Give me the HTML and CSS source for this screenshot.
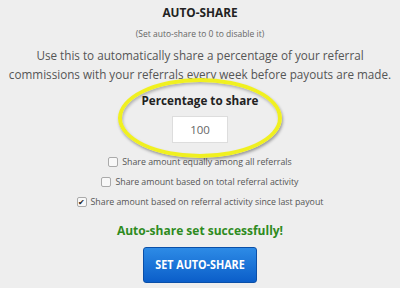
FILE: index.html
```html
<!DOCTYPE html>
<html>
<head>
<meta charset="utf-8">
<link rel="stylesheet" href="styles.css">
</head>
<body>
<div class="page">
  <h1 class="title">AUTO-SHARE</h1>
  <p class="hint">(Set auto-share to 0 to disable it)</p>
  <p class="lead">Use this to automatically share a percentage of your referral<br>commissions with your referrals every week before payouts are made.</p>
  <div class="pct">
    <div class="pct-label">Percentage to share</div>
    <div class="pct-input">100</div>
    <div class="ring"></div>
  </div>
  <div class="options">
    <label class="opt"><span class="box"></span>Share amount equally among all referrals</label>
    <label class="opt"><span class="box"></span>Share amount based on total referral activity</label>
    <label class="opt"><span class="box checked">&#10004;</span>Share amount based on referral activity since last payout</label>
  </div>
  <div class="success">Auto-share set successfully!</div>
  <div class="btn"><span class="btn-text">SET AUTO-SHARE</span></div>
</div>
</body>
</html>
```
FILE: styles.css
```css
html, body {
  margin: 0;
  padding: 0;
  background: #eeeeee;
}
.page {
  width: 400px;
  height: 288px;
  overflow: hidden;
  font-family: "Open Sans", "Noto Sans", sans-serif;
  color: #444;
  display: flex;
  flex-direction: column;
  align-items: center;
  text-align: center;
}
.title {
  margin: 4px 0 0;
  font-size: 11.8px;
  font-weight: 700;
  line-height: 16px;
  color: #222;
}
.hint {
  margin: 9px 0 0;
  font-size: 8.5px;
  line-height: 10px;
  color: #666;
}
.lead {
  margin: 6.5px 0 0;
  font-size: 11.7px;
  line-height: 19px;
  color: #555;
  white-space: nowrap;
}
.pct {
  position: relative;
  display: flex;
  flex-direction: column;
  align-items: center;
  margin-top: 8.5px;
}
.pct-label {
  font-size: 11.7px;
  font-weight: 700;
  color: #222;
  line-height: 16px;
}
.pct-input {
  margin-top: 8px;
  width: 56px;
  height: 27px;
  box-sizing: border-box;
  background: #fff;
  border: 1px solid #ddd;
  font-size: 11.5px;
  line-height: 25px;
  color: #666;
}
.ring {
  position: absolute;
  left: 50%;
  top: -14px;
  width: 164px;
  height: 80px;
  box-sizing: border-box;
  margin-left: -82px;
  border: 4px solid #f0f020;
  border-radius: 50%;
  box-shadow: 1px 2px 3px rgba(0,0,0,0.35), inset 1px 2px 3px rgba(0,0,0,0.25);
}
.options {
  display: flex;
  flex-direction: column;
  align-items: center;
  margin-top: 13px;
  gap: 8px;
}
.opt {
  display: flex;
  align-items: center;
  font-size: 8.8px;
  line-height: 12px;
  color: #555;
}
.box {
  width: 8px;
  height: 8px;
  border: 1px solid #aaa;
  border-radius: 2px;
  background: #f8f8f8;
  margin-right: 4px;
  font-size: 8px;
  line-height: 8px;
  color: #222;
  display: inline-flex;
  align-items: center;
  justify-content: center;
}
.success {
  margin-top: 15px;
  font-size: 12px;
  font-weight: 700;
  color: #2e8b1e;
  line-height: 16px;
}
.btn {
  margin-top: 8px;
  width: 114px;
  height: 36px;
  background: linear-gradient(#2d8be6, #0b5ec9);
  border: 1px solid #0a4fa8;
  border-radius: 3px;
  box-sizing: border-box;
  color: #fff;
  display: flex;
  align-items: center;
  justify-content: center;
  flex-shrink: 0;
}
.btn-text {
  font-weight: 700;
  font-size: 12.5px;
  line-height: 16px;
  white-space: nowrap;
  display: inline-block;
  transform: scaleX(0.86);
}
```
